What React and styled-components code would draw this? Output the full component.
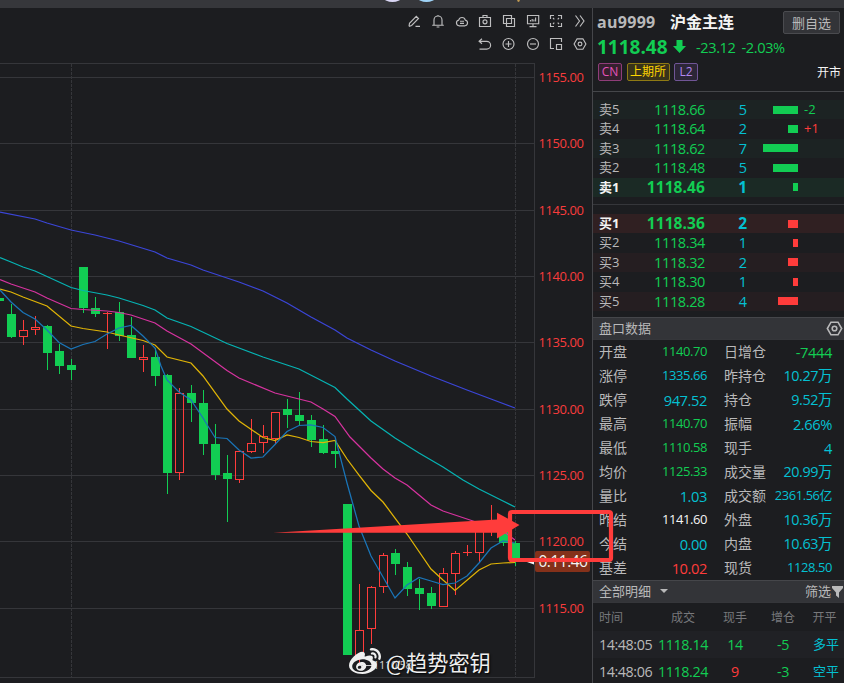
import React from "react";
import styled, { createGlobalStyle, css } from "styled-components";
import { FaWeibo } from "react-icons/fa";

//* Variables
const green = "#12cd53";
const red = "#ff3c3b";
const cyan = "#04c0d2";
const gray = "#b9b9ba";
const line = "#35363a";
const font = `"Open Sans", "Noto Sans CJK SC", sans-serif`;

//* Data
const sells = [
  { label: "卖5", price: "1118.66", lots: 5, diff: "-2" },
  { label: "卖4", price: "1118.64", lots: 2, diff: "+1" },
  { label: "卖3", price: "1118.62", lots: 7 },
  { label: "卖2", price: "1118.48", lots: 5 },
  { label: "卖1", price: "1118.46", lots: 1, best: true },
];

const buys = [
  { label: "买1", price: "1118.36", lots: 2, best: true },
  { label: "买2", price: "1118.34", lots: 1 },
  { label: "买3", price: "1118.32", lots: 2 },
  { label: "买4", price: "1118.30", lots: 1 },
  { label: "买5", price: "1118.28", lots: 4 },
];

const stats = [
  ["开盘", "1140.70", green, "日增仓", "-7444", green],
  ["涨停", "1335.66", cyan, "昨持仓", "10.27万", cyan],
  ["跌停", "947.52", cyan, "持仓", "9.52万", cyan],
  ["最高", "1140.70", green, "振幅", "2.66%", cyan],
  ["最低", "1110.58", green, "现手", "4", cyan],
  ["均价", "1125.33", green, "成交量", "20.99万", cyan],
  ["量比", "1.03", cyan, "成交额", "2361.56亿", cyan],
  ["昨结", "1141.60", "#f4f4f4", "外盘", "10.36万", cyan],
  ["今结", "0.00", cyan, "内盘", "10.63万", cyan],
  ["基差", "10.02", red, "现货", "1128.50", cyan],
];

const trades = [
  { time: "14:48:05", price: "1118.14", lots: "14", color: green, diff: "-5", type: "多平" },
  { time: "14:48:06", price: "1118.24", lots: "9", color: red, diff: "-3", type: "空平" },
];

const axis = [
  ["1155.00", 77],
  ["1150.00", 143],
  ["1145.00", 210],
  ["1140.00", 276],
  ["1135.00", 342],
  ["1130.00", 409],
  ["1125.00", 475],
  ["1120.00", 541],
  ["1115.00", 608],
];

// [rising, body top, body bottom, wick top, wick bottom], one candle every 12px
const candles = [
  [0, 298, 301, 298, 301],
  [0, 314, 337, 304, 338],
  [1, 330, 337, 320, 345],
  [1, 327, 330, 316, 335],
  [0, 326, 353, 325, 370],
  [0, 351, 366, 344, 374],
  [0, 365, 370, 359, 380],
  [0, 267, 308, 267, 313],
  [0, 308, 314, 297, 317],
  [1, 313, 314, 312, 349],
  [0, 312, 336, 302, 341],
  [0, 335, 358, 317, 358],
  [1, 357, 360, 345, 372],
  [0, 357, 376, 348, 386],
  [0, 375, 473, 374, 494],
  [1, 393, 473, 388, 480],
  [0, 393, 403, 385, 422],
  [0, 403, 444, 390, 455],
  [0, 444, 475, 424, 480],
  [0, 473, 479, 455, 522],
  [1, 451, 480, 451, 483],
  [1, 443, 452, 419, 453],
  [1, 436, 443, 425, 453],
  [1, 412, 439, 412, 444],
  [0, 409, 415, 399, 428],
  [0, 415, 421, 392, 426],
  [0, 420, 440, 415, 447],
  [0, 439, 453, 425, 454],
  [0, 451, 454, 440, 468],
  [0, 504, 655, 504, 655],
  [1, 630, 656, 584, 665],
  [1, 587, 629, 586, 644],
  [1, 555, 587, 553, 593],
  [0, 553, 564, 549, 575],
  [0, 567, 589, 562, 596],
  [0, 588, 594, 579, 610],
  [0, 593, 606, 587, 609],
  [1, 573, 607, 568, 607],
  [1, 553, 574, 551, 595],
  [1, 552, 553, 545, 556],
  [1, 522, 553, 522, 563],
  [1, 524, 525, 505, 536],
  [0, 526, 543, 526, 546],
  [0, 543, 560, 541, 566],
];

const averages = [
  {
    color: "#3b46d8",
    points:
      "0,212 35,219 47,223 71,230 95,235 119,241 155,252 167,258 191,265 203,270 239,282 263,291 287,303 311,317 335,330 347,338 371,350 395,361 431,376 467,390 491,399 515,408",
  },
  {
    color: "#06b3b3",
    points:
      "0,257.5 11,262 23,267 35,271 71,287.5 83,290.5 107,295 119,298 143,305.5 155,310 167,318 191,326.5 227,343.5 263,357 287,365 299,369 335,387.5 347,399 359,410 371,421 395,438 419,453 443,467 463,480 479,489 503,501 515,507",
  },
  {
    color: "#d6339f",
    points:
      "0,279.5 11,284 35,292 47,298 71,308.5 83,309.5 107,311 119,312.5 131,315 155,323 167,331 191,344 227,370.5 239,378 275,393 299,399 311,402 323,409 335,416.5 350,437 359,446 371,458 383,469 395,478 407,485 419,495 431,505 443,511 479,523 491,526 503,531 515,540",
  },
  {
    color: "#e0b406",
    points:
      "0,289 11,292 23,297 47,306 71,326 83,328.5 107,332 119,335 143,340.5 155,345 167,357 191,363 203,376 227,409 239,421 263,437.5 275,440.5 287,435 299,437.5 311,441.5 323,442.5 335,440.5 347,459 359,475 371,490.5 383,502 395,518 407,534 431,569 443,580 455,590.5 479,570 491,564 503,563 515,562.5",
  },
  {
    color: "#1a75b8",
    points:
      "0,290 11,302 23,312.5 35,319 47,330 59,342.5 71,349 83,344.5 95,341.5 107,334 119,328 131,325.5 143,336 155,348 161,366 167,380 179,392 191,400 203,418 215,437.5 227,438.5 239,450 251,458 263,457 275,444.5 287,431.5 299,425.5 311,425 323,427.5 335,436.5 347,483 359,526 371,556 383,577 395,598 407,585 419,577.5 431,581 443,584.5 455,583 467,576 479,563 491,548 503,541 515,543",
  },
];

const topIcons = [
  // pencil
  <path d="M2 12.4 2.5 9.3 9.3 2.4 11.5 4.5 4.6 11.5 2 12.4M8.5 12.4H13" />,
  // bell
  <path d="M1.2 11.2H12.8M3 11V6a4 4 0 0 1 8 0v5M5.6 13H8.4M7 1v1" />,
  // cloud
  <path d="M4 11.8a2.9 2.9 0 0 1-.3-5.7 3.4 3.4 0 0 1 6.6 0 2.9 2.9 0 0 1-.3 5.7zM5 7.2H9M5 9.3H9" />,
  // camera
  <>
    <path d="M1.5 3.5h11v9h-11zM5 3.5v-2h4v2" />
    <circle cx="7" cy="7.8" r="2" />
  </>,
  // layers
  <path d="M1.5 1.5h8v8h-8zM4.5 4.5h8v8h-8z" />,
  // monitor
  <path d="M1.5 1.5h11.2v8.2H1.5zM4.5 7.5V6M6.2 7.5V5M7.9 7.5V5.5M9.6 7.5V3.5M7 10v2.5M3.5 12.6h7" />,
  // expand
  <path d="M1.5 5V1.5H5M9 1.5h3.5V5M12.5 9v3.5H9M5 12.5H1.5V9M4 4l1.3 1.3M10 4 8.7 5.3M10 10 8.7 8.7M4 10l1.3-1.3" />,
  // chevrons
  <path d="M2.5 1.5 6.5 7l-4 5.5M7 1.5 11 7l-4 5.5" />,
];

const bottomIcons = [
  // undo
  <path d="M4 1.8 1.1 4.3 4 6.8M1.1 4.3h7.6a3.9 3.9 0 0 1 0 7.8H1.5" />,
  // zoom in
  <>
    <circle cx="6.5" cy="7" r="5.5" />
    <path d="M3.5 7h6M6.5 4v6" />
  </>,
  // zoom out
  <>
    <circle cx="7" cy="7" r="5.5" />
    <path d="M4 7h6" />
  </>,
  // window
  <path d="M5 11.5H1.5v-10h11V5M7.5 7.5h5v5h-5z" />,
  <Hexagon />,
];

function Hexagon() {
  return (
    <>
      <path d="M4.1 1.8h5.8L12.9 7l-3 5.2H4.1L1.1 7z" />
      <circle cx="7" cy="7" r="1.9" />
    </>
  );
}

function IconRow({ icons }) {
  return (
    <ToolRow>
      {icons.map((icon, i) => (
        <Icon key={i} viewBox="0 0 14 14">
          {icon}
        </Icon>
      ))}
    </ToolRow>
  );
}

function Chart() {
  return (
    <ChartSvg viewBox="0 56 592 627">
      <g stroke={line} shapeRendering="crispEdges">
        <path d="M0 63.5H534M0 677.5H534M534.5 63V678" />
        {axis.map(([label, y]) => (
          <path key={label} d={`M0 ${y + 0.5}H534`} />
        ))}
        <path d="M71.5 64V677M515.5 64V677" strokeDasharray="3 1" />
      </g>
      {candles.map(([up, top, bottom, high, low], i) => {
        const x = i * 12 - 1;
        return up ? (
          <g key={i} stroke={red} fill="none" shapeRendering="crispEdges">
            <path d={`M${x + 0.5} ${high}V${top}M${x + 0.5} ${bottom}V${low}`} />
            {bottom - top > 1 ? (
              <rect x={x - 3.5} y={top + 0.5} width="8" height={bottom - top - 1} />
            ) : (
              <path d={`M${x - 4} ${top + 0.5}h9`} />
            )}
          </g>
        ) : (
          <g key={i} fill={green} shapeRendering="crispEdges">
            <rect x={x} y={high} width="1" height={low - high} />
            <rect x={x - 4} y={top} width="9" height={bottom - top} />
          </g>
        );
      })}
      {averages.map(({ color, points }) => (
        <polyline key={color} points={points} fill="none" stroke={color} strokeWidth="1.25" />
      ))}
      {axis.map(([label, y]) => (
        <AxisText key={label} x="538.5" y={y + 5}>
          {label}
        </AxisText>
      ))}
      <path d="M361 665.5H372" stroke="#c9c9c9" />
      <LowText x="373" y="669">
        1110.58
      </LowText>
      <rect x="535" y="551" width="55" height="21" rx="2" fill="#85311a" />
      <path d="M527 562 534 559.5V564.5Z" fill="#f4f4f4" />
      <ClockText x="538.5" y="567">
        0:11:46
      </ClockText>
    </ChartSvg>
  );
}

function OrderRows({ rows, side }) {
  return (
    <OrderList>
      {rows.map(({ label, price, lots, diff, best }, i) => (
        <OrderRow key={label} $best={best} $tint={i % 2 === 0} $side={side}>
          <OrderLabel>{label}</OrderLabel>
          <OrderPrice $best={best}>{price}</OrderPrice>
          <OrderLots $best={best}>{lots}</OrderLots>
          <BarTrack>
            <Bar $side={side} style={{ width: lots * 5 }} />
          </BarTrack>
          <Diff $up={diff === "+1"}>{diff}</Diff>
        </OrderRow>
      ))}
    </OrderList>
  );
}

function App() {
  return (
    <>
      <Global />
      <Page>
        <TopBar>
          <Blob $left={384} $width={17} $color="#d9d6f4" />
          <Blob $left={418} $width={17} $color="#9fd3f7" />
          <Blob $left={517} $width={3} $color="#c09a52" />
        </TopBar>
        <Content>
          <ChartPane>
            <Toolbar>
              <IconRow icons={topIcons} />
              <IconRow icons={bottomIcons} />
            </Toolbar>
            <Chart />
          </ChartPane>
          <Side>
            <Quote>
              <NameRow>
                <Code>au9999</Code>
                <Name>沪金主连</Name>
                <RemoveButton>删自选</RemoveButton>
              </NameRow>
              <PriceRow>
                <Price>1118.48</Price>
                <svg width="13" height="13" viewBox="0 0 13 13">
                  <path d="M3.5 0h6v6H13L6.5 13 0 6h3.5z" fill={green} />
                </svg>
                <Change>-23.12</Change>
                <Change>-2.03%</Change>
              </PriceRow>
              <TagRow>
                <Tag $color="#e552bb" $border="#8f3d79" $bg="#36202f" $width={24}>
                  CN
                </Tag>
                <Tag $color="#ffd500" $border="#8f7a14" $bg="#38331a" $width={43}>
                  上期所
                </Tag>
                <Tag $color="#b287f0" $border="#705596" $bg="#2c2637" $width={24}>
                  L2
                </Tag>
                <Status>开市</Status>
              </TagRow>
            </Quote>
            <OrderBlock>
              <OrderRows rows={sells} side="sell" />
            </OrderBlock>
            <OrderBlock>
              <OrderRows rows={buys} side="buy" />
            </OrderBlock>
            <SectionBar>
              盘口数据
              <SectionIcon viewBox="0 0 14 14">
                <Hexagon />
              </SectionIcon>
            </SectionBar>
            <Stats>
              {stats.map(([label, value, color, label2, value2, color2]) => (
                <StatRow key={label}>
                  <span>{label}</span>
                  <StatValue $color={color} $small={value.length > 6}>
                    {value}
                  </StatValue>
                  <StatLabel>{label2}</StatLabel>
                  <StatValue
                    $color={color2}
                    $small={value2.length > 6 || value2 === "1128.50"}
                    $cjk={/[万亿]/.test(value2)}
                    $long={value2.length > 7}
                  >
                    {value2}
                  </StatValue>
                </StatRow>
              ))}
            </Stats>
            <SectionBar>
              <span>全部明细</span>
              <Caret viewBox="0 0 8 4">
                <path d="M0 0h8L4 4z" />
              </Caret>
              <Filter>
                筛选
                <svg width="11" height="12" viewBox="0 0 11 12">
                  <path d="M0 0h11v2L7 6.5V12L4 9.5v-3L0 2z" fill={gray} />
                </svg>
              </Filter>
            </SectionBar>
            <TradeHead>
              <TimeCell>时间</TimeCell>
              <span>成交</span>
              <span>现手</span>
              <span>增仓</span>
              <span>开平</span>
            </TradeHead>
            {trades.map(({ time, price, lots, color, diff, type }, i) => (
              <TradeRow key={time} $tint={i === 0}>
                <TimeCell>{time}</TimeCell>
                <Cell $color={green}>{price}</Cell>
                <Cell $color={color}>{lots}</Cell>
                <Cell $color={green}>{diff}</Cell>
                <TypeCell>{type}</TypeCell>
              </TradeRow>
            ))}
          </Side>
        </Content>
        <Marks viewBox="0 0 844 683">
          <rect x="510" y="512" width="101" height="48" rx="2" fill="none" stroke={red} strokeWidth="4.2" />
          <path d="M273 532.8 497 519.5V512.7L519.5 525 497 538.5V532.8Z" fill={red} />
        </Marks>
        <Watermark>
          <FaWeibo size={32} />
          @趋势密钥
        </Watermark>
      </Page>
    </>
  );
}

export default App;

const Global = createGlobalStyle`
  * {
    box-sizing: border-box;
  }

  body {
    margin: 0;
    overflow: hidden;
    background: #1c1d20;
    font-family: ${font};
  }
`;

const Page = styled.div`
  position: relative;
  display: flex;
  flex-direction: column;
  width: 844px;
  height: 683px;
  overflow: hidden;
  background: #1c1d20;
  color: ${gray};
`;

const TopBar = styled.div`
  position: relative;
  height: 8px;
  flex: none;
  overflow: hidden;
  background: #36373b;
`;

const Blob = styled.i`
  position: absolute;
  left: ${(props) => props.$left}px;
  top: -6px;
  width: ${(props) => props.$width}px;
  height: 8px;
  border-radius: 50%;
  background: ${(props) => props.$color};
`;

const Content = styled.div`
  display: grid;
  grid-template-columns: 592px 252px;
  flex: 1;
  min-height: 0;
`;

const ChartPane = styled.div`
  display: flex;
  flex-direction: column;
`;

const Toolbar = styled.div`
  height: 48px;
  padding: 6px 5px 0 0;
`;

const ToolRow = styled.div`
  display: flex;
  justify-content: flex-end;
  gap: 9.7px;
  height: 23px;
`;

const Icon = styled.svg`
  width: 14px;
  height: 14px;
  fill: none;
  stroke: #bebebf;
  stroke-width: 1.15;
`;

const ChartSvg = styled.svg`
  display: block;
  width: 592px;
  height: 627px;
`;

const AxisText = styled.text`
  font-size: 13px;
  letter-spacing: -0.43px;
  fill: #f93c3c;
`;

const LowText = styled.text`
  font-size: 11px;
  fill: #d8d8d8;
  letter-spacing: -0.3px;
`;

const ClockText = styled.text`
  font-size: 15.5px;
  fill: #f4f4f4;
  letter-spacing: -0.5px;
`;

const Side = styled.div`
  border-left: 1px solid #45464a;
  min-width: 0;
  overflow: hidden;
`;

const Quote = styled.div`
  height: 84px;
  padding: 3px 4px 0 4px;
  border-bottom: 1px solid #45464a;
`;

const NameRow = styled.div`
  display: flex;
  align-items: center;
  height: 23px;
  line-height: 23px;
  font-weight: 700;
`;

const Code = styled.span`
  width: 73px;
  font-size: 16px;
  letter-spacing: 0.3px;
`;

const Name = styled.span`
  font-size: 16px;
  font-weight: 600;
  color: #f4f4f4;
`;

const RemoveButton = styled.button`
  width: 57px;
  height: 23px;
  margin-left: auto;
  padding: 0;
  border: 1px solid #4a4b4f;
  border-radius: 2px;
  background: #333438;
  color: ${gray};
  font-family: ${font};
  font-size: 13px;
  line-height: 20px;
`;

const PriceRow = styled.div`
  display: flex;
  align-items: center;
  height: 25px;
  line-height: 24px;
  color: ${green};
`;

const Price = styled.strong`
  width: 76px;
  font-size: 19px;
  letter-spacing: 0;
`;

const Change = styled.span`
  margin-left: 10px;
  font-size: 14.6px;
  letter-spacing: -0.4px;

  & + & {
    margin-left: 6px;
  }
`;

const TagRow = styled.div`
  display: flex;
  align-items: center;
  height: 26px;
  margin-right: -4px;
  padding-left: 1px;
`;

const Tag = styled.span`
  width: ${(props) => props.$width}px;
  height: 18px;
  margin-right: 4.5px;
  border: 1px solid ${(props) => props.$border};
  border-radius: 2px;
  background: ${(props) => props.$bg};
  color: ${(props) => props.$color};
  font-size: 12px;
  line-height: 16px;
  text-align: center;
`;

const Status = styled.span`
  margin-left: auto;
  margin-right: 3px;
  font-size: 12px;
  color: #f4f4f4;
`;

const OrderBlock = styled.div`
  height: 113px;
  padding-top: 8px;
  border-bottom: 1px solid ${line};

  & + & {
    padding-top: 9px;
    border-color: #45464a;
  }
`;

const OrderList = styled.div`
  display: grid;
  grid-template-rows: repeat(5, 19.4px);
`;

const OrderRow = styled.div`
  display: grid;
  grid-template-columns: 48px 58px 45px 48px 1fr;
  align-items: center;
  height: 19px;
  padding-left: 6px;
  font-size: 13.5px;
  line-height: 19px;

  ${(props) =>
    props.$tint &&
    css`
      background: ${props.$side === "sell" ? "#1c2323" : "#251e21"};
    `}

  ${(props) =>
    props.$best &&
    css`
      background: ${props.$side === "sell" ? "#1b2a25" : "#302022"};
      color: #f4f4f4;
      font-weight: 700;
    `}
`;

const OrderLabel = styled.span`
  font-size: 13px;
  white-space: nowrap;
`;

const OrderPrice = styled.span`
  font-size: ${(props) => (props.$best ? "15.5px" : "14.5px")};
  letter-spacing: ${(props) => (props.$best ? "0.1px" : "-0.38px")};
  color: ${green};
  justify-self: end;
`;

const OrderLots = styled.span`
  font-size: ${(props) => (props.$best ? "15.5px" : "14.5px")};
  color: ${cyan};
  justify-self: end;
  padding-right: 3px;
`;

const BarTrack = styled.div`
  display: flex;
  justify-content: flex-end;
`;

const Bar = styled.div`
  height: 8px;
  background: ${(props) => (props.$side === "sell" ? green : red)};
`;

const Diff = styled.span`
  padding-left: 6px;
  font-size: 13px;
  color: ${(props) => (props.$up ? red : green)};
`;

const SectionBar = styled.div`
  display: flex;
  align-items: center;
  height: 22px;
  padding: 0 1px 0 6px;
  background: #333438;
  border-bottom: 1px solid ${line};
  font-size: 13px;
  line-height: 21px;
`;

const SectionIcon = styled.svg`
  width: 17px;
  height: 17px;
  margin-left: auto;
  fill: none;
  stroke: ${gray};
  stroke-width: 1.3;
`;

const Stats = styled.div`
  display: grid;
  grid-auto-rows: 24px;
  height: 241px;
  padding: 0 12px 0 6px;
  border-bottom: 1px solid #45464a;
`;

const StatRow = styled.div`
  display: grid;
  grid-template-columns: 40px 68px 60px 1fr;
  font-size: 14px;
  line-height: 24px;
  white-space: nowrap;
`;

const StatLabel = styled.span`
  padding-left: 17px;
`;

const StatValue = styled.span`
  justify-self: end;
  color: ${(props) => props.$color};
  font-size: ${(props) => (props.$small ? 13 : 14.7)}px;
  letter-spacing: -0.42px;
  line-height: ${(props) => (props.$small ? 22 : 24)}px;

  ${(props) =>
    props.$cjk &&
    css`
      font-size: ${props.$long ? 12.9 : 14.4}px;
    `}
`;

const Caret = styled.svg`
  width: 8px;
  height: 4px;
  margin-left: 9px;
  margin-top: -2px;
  fill: ${gray};
`;

const Filter = styled.div`
  display: flex;
  align-items: center;
  gap: 1px;
  margin-left: auto;
`;

const tradeGrid = css`
  display: grid;
  grid-template-columns: 58px 52px 52px 44px 1fr;
  align-items: center;
  padding-left: 6px;
  text-align: center;
`;

const TradeHead = styled.div`
  ${tradeGrid}
  height: 28px;
  font-size: 12px;
  color: #77787b;
`;

const TradeRow = styled.div`
  ${tradeGrid}
  height: 27px;
  font-size: 14.3px;
  letter-spacing: -0.42px;
  line-height: 27px;
  background: ${(props) => (props.$tint ? "#202125" : "transparent")};
`;

const TimeCell = styled.span`
  text-align: left;
  white-space: nowrap;
`;

const Cell = styled.span`
  color: ${(props) => props.$color};
`;

const TypeCell = styled.span`
  padding-left: 3px;
  color: ${cyan};
  font-size: 13px;
  letter-spacing: 0;
`;

const Marks = styled.svg`
  position: absolute;
  left: 0;
  top: 0;
  width: 844px;
  height: 683px;
  pointer-events: none;
`;

const Watermark = styled.div`
  position: absolute;
  left: 349px;
  top: 646px;
  display: flex;
  align-items: center;
  gap: 5px;
  height: 32px;
  color: #efefef;
  font-family: "Noto Sans CJK SC", sans-serif;
  font-size: 21.2px;
  line-height: 32px;
  white-space: nowrap;
  text-shadow: 1px 1px 2px #000;
`;
